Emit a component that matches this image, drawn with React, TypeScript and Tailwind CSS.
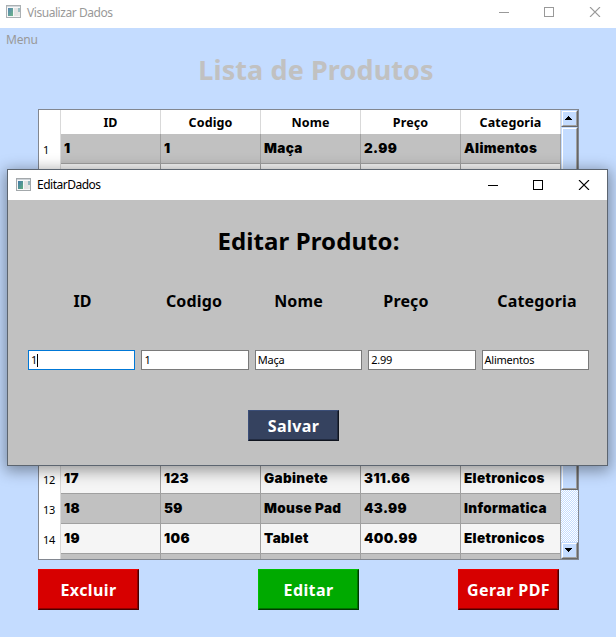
import React from "react";

const columns = ["ID", "Codigo", "Nome", "Preço", "Categoria"];

type Row = { n: number; cells: string[] };

const rows: Row[] = Array.from({ length: 15 }, (_, i) => ({ n: i + 1, cells: ["", "", "", "", ""] }));
rows[0].cells = ["1", "1", "Maça", "2.99", "Alimentos"];
rows[11].cells = ["17", "123", "Gabinete", "311.66", "Eletronicos"];
rows[12].cells = ["18", "59", "Mouse Pad", "43.99", "Informatica"];
rows[13].cells = ["19", "106", "Tablet", "400.99", "Eletronicos"];
const visible = [1, 12, 13, 14];

function AppIcon() {
  return (
    <svg width="16" height="14" viewBox="0 0 16 14" shapeRendering="crispEdges">
      <defs>
        <linearGradient id="pane" x1="0" y1="0" x2="1" y2="1">
          <stop offset="0" stopColor="#4178ab" />
          <stop offset="1" stopColor="#5fae7c" />
        </linearGradient>
      </defs>
      <rect x="0.5" y="0.5" width="14" height="12" fill="#f7f7f7" stroke="#a3a8ab" />
      <rect x="1" y="1" width="13" height="1" fill="#cdd3d8" />
      <rect x="2" y="3" width="5" height="8" fill="url(#pane)" />
      <rect x="8" y="3" width="4" height="8" fill="#e2e2e2" />
      <rect x="12" y="3" width="2" height="4" fill="#91b7bd" />
      <rect x="12" y="7" width="2" height="4" fill="#e5e8e5" />
    </svg>
  );
}

function WindowControls() {
  return (
    <svg width="102" height="10" viewBox="0 0 102 10" fill="none" stroke="currentColor">
      <path d="M0 5.5H10" shapeRendering="crispEdges" />
      <rect x="45.5" y="0.5" width="9" height="9" shapeRendering="crispEdges" />
      <path d="M91 0l10 10M101 0l-10 10" strokeWidth="1.1" />
    </svg>
  );
}

function ScrollButton({ down }: { down?: boolean }) {
  return (
    <div className="flex h-[17px] w-[17px] shrink-0 items-center justify-center border border-t-[#c4dcff] border-l-[#c4dcff] border-r-[#686868] border-b-[#686868] bg-[#c4dcff]">
      <div className="flex h-[15px] w-[15px] items-center justify-start border border-t-white border-l-white border-r-[#a0a0a0] border-b-[#a0a0a0] pb-px pl-[2px]">
        <svg width="7" height="4" viewBox="0 0 7 4" shapeRendering="crispEdges" className={down ? "rotate-180" : ""}>
          <path d="M3 0h1v1h1v1h1v1h1v1H0V3h1V2h1V1h1z" fill="#000" />
        </svg>
      </div>
    </div>
  );
}

function Scrollbar() {
  return (
    <div className="flex w-[17px] flex-col bg-[repeating-conic-gradient(#ffffff_0_25%,#c4dcff_0_50%)] bg-[length:2px_2px]">
      <ScrollButton />
      <div className="h-[363px] w-[17px] border border-t-[#c4dcff] border-l-[#c4dcff] border-r-[#686868] border-b-[#686868] bg-[#c4dcff]">
        <div className="h-full border border-t-white border-l-white border-r-[#a0a0a0] border-b-[#a0a0a0]" />
      </div>
      <div className="flex-1" />
      <ScrollButton down />
    </div>
  );
}

function ProductTable() {
  return (
    <div className="mx-[38px] flex h-[451px] w-[541px] border border-[#828790] bg-white">
      <div className="h-full w-[522px] overflow-hidden">
        <div className="flex h-6">
          <div className="w-[22px] border-r border-[#d9d9d9]" />
          {columns.map((c) => (
            <div
              key={c}
              className="w-[100px] border-r border-[#d9d9d9] text-center text-[12.5px] leading-[25px] font-bold tracking-[0.1px]"
            >
              {c}
            </div>
          ))}
        </div>
        {rows.map((r) => (
          <div key={r.n} className="flex h-[30px]">
            <div className="w-[22px] border-r border-[#d9d9d9] pl-[4px] text-[11px] leading-[32px] tracking-[-0.3px]">
              {visible.includes(r.n) ? r.n : ""}
            </div>
            {r.cells.map((c, i) => (
              <div
                key={i}
                className={`w-[100px] border-r border-b border-[#a0a0a0] pl-[3px] font-['Inter',sans-serif] text-[13.5px] leading-[28px] font-black tracking-[0.35px] whitespace-nowrap ${r.n % 2 ? "bg-[#c1c1c1]" : "bg-[#f5f5f5]"}`}
              >
                {c}
              </div>
            ))}
          </div>
        ))}
      </div>
      <Scrollbar />
    </div>
  );
}

function EditDialog() {
  const labels = [
    ["ID", "ml-[65px] w-[19px]"],
    ["Codigo", "ml-[74px] w-[56px]"],
    ["Nome", "ml-[53px] w-[47px]"],
    ["Preço", "ml-[61px] w-[46px]"],
    ["Categoria", "ml-[68px] w-[80px]"],
  ];
  const values = ["1", "1", "Maça", "2.99", "Alimentos"];
  return (
    <div className="absolute top-[169px] left-[7px] h-[297px] w-[601px] border border-[#5c6570] bg-[#c1c1c1] shadow-[0_3px_14px_2px_rgba(0,0,0,0.38)]">
      <div className="flex h-[30px] items-center bg-white pl-2">
        <div className="-mt-px">
          <AppIcon />
        </div>
        <span className="-mt-[1px] ml-[5px] text-[12px] tracking-[-0.5px]">EditarDados</span>
        <div className="mr-[17px] ml-auto">
          <WindowControls />
        </div>
      </div>
      <h2 className="mt-[21px] ml-[2px] h-10 text-center text-[24px] leading-10 font-bold tracking-[0.1px]">
        Editar Produto:
      </h2>
      <div className="mt-[28px] flex h-6 leading-6">
        {labels.map(([t, c]) => (
          <div key={t} className={`flex justify-center text-[16px] font-bold tracking-[0.15px] whitespace-nowrap ${c}`}>
            {t}
          </div>
        ))}
      </div>
      <div className="mt-[37px] ml-5 grid w-[561px] grid-cols-5 gap-1.5">
        {values.map((v, i) => (
          <div
            key={i}
            className={`flex h-5 items-center border bg-white pl-[2px] text-[11px] ${i === 0 ? "border-[#0078d7]" : "border-[#7a7a7a]"}`}
          >
            <span className="pt-px tracking-[-0.25px]">{v}</span>
            {i === 0 && <span className="h-[13px] w-px bg-black" />}
          </div>
        ))}
      </div>
      <button className="mt-10 ml-[240px] block h-[31px] w-[91px] border border-t-[#3b4e78] border-r-[#10151f] border-b-[#10151f] border-l-[#3b4e78] bg-[#35425f] text-[16px] leading-[28px] font-bold tracking-[0.4px] text-white shadow-[inset_-1px_-1px_0_#222b40]">
        Salvar
      </button>
    </div>
  );
}

export default function App() {
  return (
    <div className="relative h-[637px] w-[616px] overflow-hidden bg-[#c4dcff] font-['Noto_Sans',sans-serif] text-black">
      <div className="flex h-7 items-center bg-white pl-1.5 text-[#999999]">
        <div className="-mt-[4px] opacity-90">
          <AppIcon />
        </div>
        <span className="-mt-[2px] ml-[5px] text-[12px] tracking-[-0.45px]">Visualizar Dados</span>
        <div className="-mt-[4px] mr-[15px] ml-auto">
          <WindowControls />
        </div>
      </div>
      <div className="h-[22px] pl-1.5 text-[12px] leading-[23px] tracking-[-0.2px] text-[#999999]">Menu</div>
      <h1 className="h-[59px] pl-[16px] text-center text-[27px] leading-[40px] font-bold tracking-[0.1px] text-[#c1c1c1]">
        Lista de Produtos
      </h1>
      <ProductTable />
      <div className="mt-[9px] ml-[38px] flex w-[521px] text-[16px] font-bold tracking-[0.4px] text-white">
        <button className="h-[41px] w-[101px] border border-t-[#f00000] border-r-[#480000] border-b-[#480000] border-l-[#f00000] bg-[#d70000] shadow-[inset_-1px_-1px_0_#8f0000]">
          Excluir
        </button>
        <button className="ml-[119px] h-[41px] w-[101px] border border-t-[#00c000] border-r-[#003900] border-b-[#003900] border-l-[#00c000] bg-[#00aa00] shadow-[inset_-1px_-1px_0_#007100]">
          Editar
        </button>
        <button className="ml-auto h-[41px] w-[101px] border border-t-[#f00000] border-r-[#480000] border-b-[#480000] border-l-[#f00000] bg-[#d70000] whitespace-nowrap shadow-[inset_-1px_-1px_0_#8f0000]">
          Gerar PDF
        </button>
      </div>
      <EditDialog />
    </div>
  );
}
